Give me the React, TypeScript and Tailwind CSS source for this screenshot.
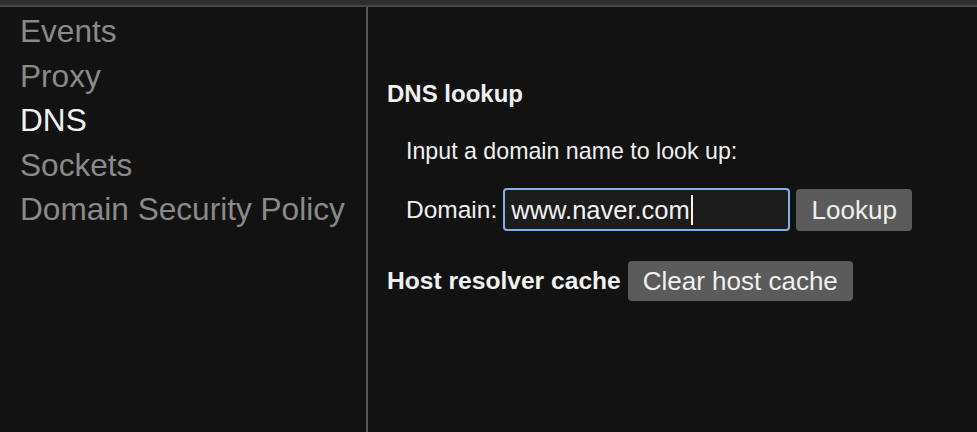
const navItems = ["Events", "Proxy", "DNS", "Sockets", "Domain Security Policy"];

export default function App() {
  return (
    <div
      className="w-[977px] h-[432px] bg-[#121212] flex flex-col overflow-hidden"
      style={{ fontFamily: '"Liberation Sans", Arial, sans-serif' }}
    >
      {/* Top strip */}
      <div className="h-[7px] shrink-0 bg-[#2e2e2e] border-b-2 border-[#474747]" />

      <div className="flex flex-1 min-h-0">
        {/* Sidebar */}
        <nav className="w-[368px] shrink-0 pt-[2px] pl-5 border-r-2 border-[#555555]">
          {navItems.map((item) => (
            <div
              key={item}
              className={
                "text-[31.6px] leading-[44.5px] whitespace-nowrap " +
                (item === "DNS" ? "text-[#f2f2f2]" : "text-[#8a8a8a]")
              }
            >
              {item}
            </div>
          ))}
        </nav>

        {/* Content */}
        <main className="flex-1 pl-[19px] pt-[73px] text-[#f0f0f0]">
          <h2 className="text-[24px] leading-[28px] font-bold">DNS lookup</h2>

          <div className="pl-[19px] mt-[29px]">
            <p className="text-[23.2px] leading-[28px]">Input a domain name to look up:</p>

            <div className="flex items-center mt-[23px] h-[43px]">
              <span className="text-[24.5px] leading-[28px] mr-[6px]">Domain:</span>
              <div className="w-[287px] h-[43px] rounded-[4px] border-2 border-[#86aee8] bg-[#1c1c1c] flex items-center pl-[6px]">
                <span className="text-[25.5px] leading-[28px] text-[#f2f2f2]">www.naver.com</span>
                <span className="w-[2px] h-[30px] bg-[#f2f2f2] ml-[1px]" />
              </div>
              <button className="ml-[6px] w-[116px] h-[42px] rounded-[4px] bg-[#5b5b5b] text-[26px] leading-[28px] text-[#f0f0f0]">
                Lookup
              </button>
            </div>
          </div>

          <div className="flex items-center mt-[30px] h-[40px]">
            <span className="text-[24.6px] leading-[28px] font-bold mr-[7px] whitespace-nowrap">Host resolver cache</span>
            <button className="w-[225px] h-[40px] rounded-[4px] bg-[#5b5b5b] text-[26px] leading-[28px] text-[#f0f0f0] whitespace-nowrap">
              Clear host cache
            </button>
          </div>
        </main>
      </div>
    </div>
  );
}
